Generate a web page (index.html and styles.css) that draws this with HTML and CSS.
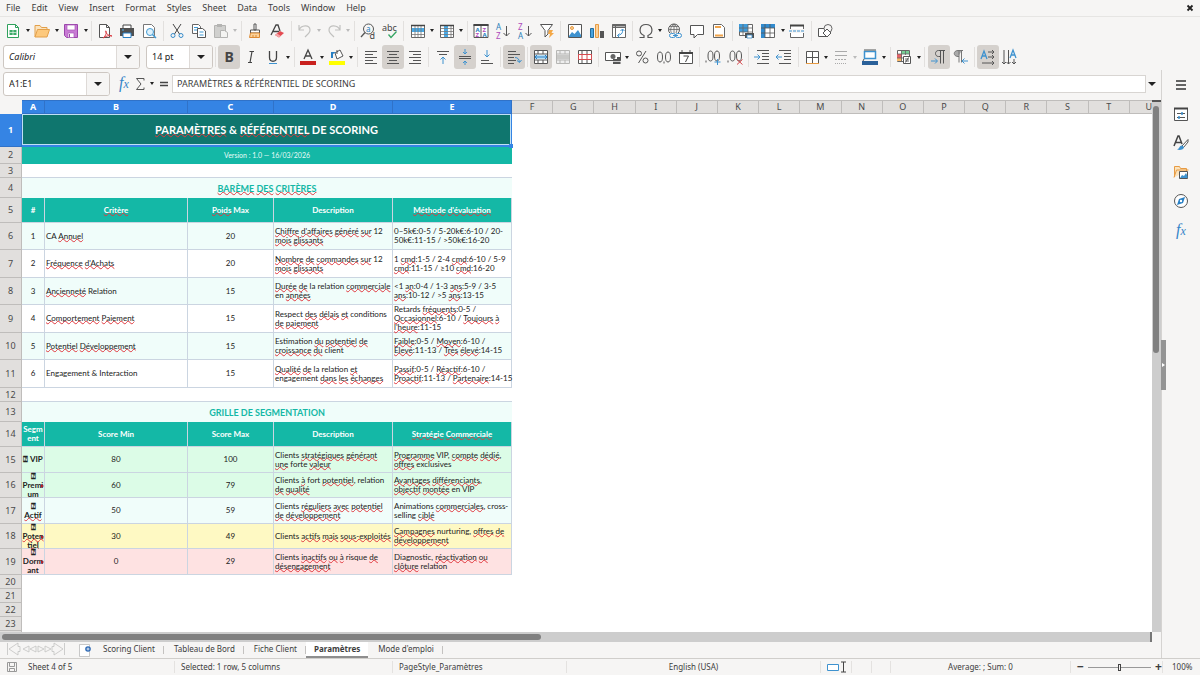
FILE: index.html
```html
<!DOCTYPE html>
<html lang="fr">
<head>
  <meta charset="UTF-8">
  <meta name="viewport" content="width=device-width, initial-scale=1.0">
  <title>Paramètres</title>
  <link rel="stylesheet" href="styles.css">
</head>
<body>
  <nav class="menubar">
    <button>File</button><button>Edit</button><button>View</button><button>Insert</button><button>Format</button><button>Styles</button><button>Sheet</button><button>Data</button><button>Tools</button><button>Window</button><button>Help</button>
    <button class="close" aria-label="Close document"><svg viewBox="0 0 8 8"><path d="M1.5 1.5l5 5M6.500 1.500l-5 5" stroke="#222" stroke-width="1.8"/></svg></button>
  </nav>

  <!-- standard toolbar -->
  <div class="toolbar standard">
    <div class="group">
      <button aria-label="New"><svg viewBox="0 0 16 16"><path d="M2.500 1.500h8l3 3v10h-11z" fill="#fff" stroke="#2fa15c"/><path d="M10.500 1.500v3h3" stroke="#2fa15c"/><path d="M4.500 7h7v5h-7z" fill="#3cab68"/><path d="M4.500 9.500h7M8 7v5" stroke="#fff" stroke-width=".6"/></svg></button><button class="dd" aria-label="New options"></button>
      <button aria-label="Open"><svg viewBox="0 0 16 16"><path d="M1 14V2.500h5l1.500 2H13V7" fill="#fbe3bd" stroke="#e3a04a"/><path d="M1 14L3.500 6.500h12L13 14z" fill="#fdc97d" stroke="#e3a04a"/></svg></button><button class="dd" aria-label="Open options"></button>
      <button aria-label="Save"><svg viewBox="0 0 16 16"><path d="M1.500 1.500h13v13h-11l-2-2z" fill="#c87ad4" stroke="#9b46ab"/><path d="M4 2h8v5H4zM5 10h6v4.500H5z" fill="#fff" stroke="#a95ab8" stroke-width=".7"/><path d="M6.500 11v3" stroke="#9b46ab"/></svg></button><button class="dd" aria-label="Save options"></button>
    </div>
    <i class="sep"></i>
    <div class="group">
      <button aria-label="Export as PDF"><svg viewBox="0 0 16 16"><path d="M2.500 1.500h7l3 3v10h-10z" fill="#fff" stroke="#555"/><path d="M9.500 1.500v3h3" stroke="#555"/><path d="M6 15c3-2 4-6 3-7s-1 4 6 5c-3-1-6 0-9 2" stroke="#dc3d45"/></svg></button>
      <button aria-label="Print"><svg viewBox="0 0 16 16"><path d="M4 5V2h8v3" fill="#fff" stroke="#444"/><path d="M1 5h14v8H1z" fill="#505050"/><path d="M4 10h8v4.500H4z" fill="#fff" stroke="#287fc4"/><path d="M3 7h2" stroke="#4eb3f2"/></svg></button>
      <button aria-label="Print preview"><svg viewBox="0 0 16 16"><path d="M2.500 1.500h8l3 3v10h-11z" fill="#fff" stroke="#777"/><circle cx="9" cy="9" r="3.500" fill="#dff1fb" stroke="#419bd3"/><path d="M11.500 11.500l3.500 3.500" stroke="#419bd3" stroke-width="1.500"/></svg></button>
    </div>
    <i class="sep"></i>
    <div class="group">
      <button aria-label="Cut"><svg viewBox="0 0 16 16"><path d="M4 1l6.500 10M12 1L5.500 11" stroke="#444"/><circle cx="4" cy="12.500" r="2" stroke="#368ccb"/><circle cx="12" cy="12.500" r="2" stroke="#368ccb"/></svg></button>
      <button aria-label="Copy"><svg viewBox="0 0 16 16"><path d="M1.500 1.500h6l2 2v7h-8z" fill="#fff" stroke="#666"/><path d="M6.500 5.500h5l3 2.500v6.500h-8z" fill="#fff" stroke="#555"/><path d="M3 4.500h4M3 7h3M8.500 9h4M8.500 12h4" stroke="#3e9bd6"/></svg></button>
      <button aria-label="Paste"><svg viewBox="0 0 16 16"><path d="M1.500 2.500h11v12h-11z" fill="#d0d0ce" stroke="#b4b4b2"/><path d="M4 1h5v3H4z" fill="#b4b4b2"/><path d="M7.500 7.500h4l3 2v5h-7z" fill="#f4f4f2" stroke="#b4b4b2"/></svg></button><button class="dd off" aria-label="Paste options"></button>
    </div>
    <i class="sep"></i>
    <div class="group">
      <button aria-label="Clone formatting"><svg viewBox="0 0 16 16"><path d="M7 1h2v6H7zM3.500 7h9v3h-9z" fill="#fff" stroke="#555"/><path d="M3.500 10h9v4.500h-10z" fill="#fbd29b" stroke="#dd8b35"/><path d="M6 14v-2m3 2v-2" stroke="#dd8b35"/></svg></button>
      <button aria-label="Clear formatting"><svg viewBox="0 0 16 16"><path d="M2 12L7 2h2l2 6M4 8.500h6" stroke="#444" stroke-width="1.300"/><path d="M6 12l5-4 4 2-5 4.500z" fill="#e44b52"/><path d="M6 12l2-1.600 3.500 2.300L10 14.500z" fill="#f4a4a7"/></svg></button>
    </div>
    <i class="sep"></i>
    <div class="group">
      <button aria-label="Undo"><svg viewBox="0 0 16 16"><path d="M2 2v5h5M2 7c2-5 11-6 11 0 0 3-3 5-5 7" stroke="#c1c1bf" stroke-width="1.200"/></svg></button><button class="dd off" aria-label="Undo options"></button>
      <button aria-label="Redo"><svg viewBox="0 0 16 16"><path d="M14 2v5H9M14 7C12 2 3 1 3 7c0 3 3 5 5 7" stroke="#c1c1bf" stroke-width="1.200"/></svg></button><button class="dd off" aria-label="Redo options"></button>
    </div>
    <i class="sep"></i>
    <div class="group">
      <button aria-label="Find and replace"><svg viewBox="0 0 16 16"><circle cx="8.500" cy="6" r="5" stroke="#555"/><path d="M5 9.500L1 14" stroke="#555" stroke-width="1.300"/><text x="6" y="8.500" font-size="8" fill="#2780bd">a</text><text x="9.500" y="15.500" font-size="9" fill="#444">d</text></svg></button>
      <button aria-label="Spelling"><svg viewBox="0 0 16 16"><text x="0" y="7.500" font-size="9" fill="#444">abc</text><path d="M6.500 11.500l2.500 3 5.500-6" stroke="#34a563" stroke-width="1.300"/></svg></button>
    </div>
    <i class="sep"></i>
    <div class="group">
      <button aria-label="Row"><svg viewBox="0 0 16 16"><path d="M1.500 2.500h13v12h-13z" fill="#fff" stroke="#666"/><path d="M2 5h12v4H2z" fill="#49a9e5"/><path d="M5 2v12M8 2v12M11 2v12M2 11.500h12" stroke="#777" stroke-width=".8"/><path d="M1 2.500h14" stroke="#444" stroke-width="1.500"/></svg></button><button class="dd" aria-label="Row options"></button>
      <button aria-label="Column"><svg viewBox="0 0 16 16"><path d="M1.500 2.500h13v12h-13z" fill="#fff" stroke="#666"/><path d="M5 3h4v11H5z" fill="#49a9e5"/><path d="M12 2v12M2 5.500h12M2 8.500h12M2 11.500h12" stroke="#777" stroke-width=".8"/><path d="M1 2.500h14" stroke="#444" stroke-width="1.500"/></svg></button><button class="dd" aria-label="Column options"></button>
    </div>
    <i class="sep"></i>
    <div class="group">
      <button aria-label="Sort"><svg viewBox="0 0 16 16"><path d="M1 1.500h14v13H1zM8 1v14" fill="#fff" stroke="#555"/><path d="M.5 2h15" stroke="#444" stroke-width="2"/><g font-size="6" font-weight="bold"><text x="2.500" y="8.500" fill="#2980ba">A</text><text x="2.500" y="14" fill="#ae4bbb">Z</text><text x="9.500" y="8.500" fill="#ae4bbb">Z</text><text x="9.500" y="14" fill="#2980ba">A</text></g></svg></button>
      <button aria-label="Sort ascending"><svg viewBox="0 0 16 16"><text x="1" y="7" font-size="8" fill="#2980ba">A</text><text x="1" y="15.500" font-size="8" fill="#ae4bbb">Z</text><path d="M11.500 3v10M8.500 10l3 3 3-3" stroke="#555"/></svg></button>
      <button aria-label="Sort descending"><svg viewBox="0 0 16 16"><text x="1" y="7" font-size="8" fill="#ae4bbb">Z</text><text x="1" y="15.500" font-size="8" fill="#2980ba">A</text><path d="M11.500 3v10M8.500 10l3 3 3-3" stroke="#555"/></svg></button>
      <button aria-label="AutoFilter"><svg viewBox="0 0 16 16"><path d="M1.500 1.500h12L9 7.500V11l-3 3V7.500z" fill="#fff" stroke="#555"/><path d="M10 7h4l-1.500 3H15l-5 5 1-4H9z" fill="#f4a846"/></svg></button>
    </div>
    <i class="sep"></i>
    <div class="group">
      <button aria-label="Insert image"><svg viewBox="0 0 16 16"><path d="M1.500 1.500h13v13h-13z" fill="#fff" stroke="#555"/><circle cx="5" cy="5" r="1.500" fill="#fbd29b" stroke="#e79b43"/><path d="M2 13l3-4 2.500 2L11 7l3 5v2H2z" fill="#3e92cf"/></svg></button>
      <button aria-label="Insert chart"><svg viewBox="0 0 16 16"><path d="M1.500 5.500h3v9h-3z" fill="#4aa4df" stroke="#246e9f"/><path d="M6.500 1.500h3v13h-3z" fill="#fbd29b" stroke="#e79b43"/><path d="M11 8h4v7h-4z" fill="#555"/></svg></button>
      <button aria-label="Insert pivot table"><svg viewBox="0 0 16 16"><path d="M1.500 1.500h13v13h-13zM2 4.500h12M4.500 2v12" fill="#fff" stroke="#666"/><path d="M1 2.500h14" stroke="#666" stroke-width="2"/><path d="M11.500 6.500v2c0 2-2 3.500-5 4M9.500 8l2-2 2 2M8.500 10.500l-2 2 2 2" stroke="#3e92cf"/></svg></button>
    </div>
    <i class="sep"></i>
    <div class="group">
      <button aria-label="Special character"><svg viewBox="0 0 16 16"><path d="M1.500 14.500H6v-2C0 10 1 1.500 8 1.500s8 8.500 2 11v2h4.500" stroke="#555" stroke-width="1.200"/></svg></button><button class="dd" aria-label="Special character options"></button>
      <button aria-label="Hyperlink"><svg viewBox="0 0 16 16"><circle cx="7" cy="6.500" r="5.500" stroke="#555"/><path d="M1.500 6.500h11M7 1v9M7 1C3 4 3 8 5 11M7 1c4 3 3 6 2 9M2.500 3.500h9" stroke="#666" stroke-width=".8"/><path d="M2 10h13v5H2z" fill="#f6f5f4"/><rect x="2.500" y="10.500" width="6" height="4" rx="2" stroke="#3e92cf"/><rect x="8.500" y="10.500" width="6" height="4" rx="2" stroke="#3e92cf"/><path d="M6 12.500h5" stroke="#3e92cf"/></svg></button>
      <button aria-label="Comment"><svg viewBox="0 0 16 16"><path d="M1.500 2.500h13v9h-6L5 15v-3.500H1.500z" fill="#fff" stroke="#555"/></svg></button>
      <button aria-label="Headers and footers"><svg viewBox="0 0 16 16"><path d="M2.500 1.500h8l3 3v10h-11z" fill="#fff" stroke="#666"/><path d="M4 3h6v2H4zM4 11.500h8v2H4z" fill="#f0a34a"/></svg></button>
    </div>
    <i class="sep"></i>
    <div class="group">
      <button aria-label="Print area"><svg viewBox="0 0 16 16"><path d="M1.500 1.500h13v11h-13z" fill="#fff" stroke="#666"/><path d="M1 1h9v8H1z" fill="#3e9bda"/><path d="M5 1v12M10 1v12M1 5h13M1 9h13" stroke="#666" stroke-width=".8"/><path d="M7 10h9v5H7z" fill="#505050"/><path d="M9 12h5v3H9z" fill="#fff" stroke="#3e92cf" stroke-width=".8"/></svg></button>
      <button aria-label="Freeze rows and columns"><svg viewBox="0 0 16 16"><path d="M1.500 1.500h13v13h-13z" fill="#fff" stroke="#666"/><path d="M1 1h14v4H5v10H1z" fill="#318bcf"/><path d="M5 1v14M10 1v14M1 5h14M1 10h14" stroke="#555" stroke-width=".8"/></svg></button><button class="dd" aria-label="Freeze options"></button>
      <button aria-label="Split window"><svg viewBox="0 0 16 16"><path d="M1.500 6V2.500h13V6M1.500 10v4.500h13V10" fill="#fff" stroke="#666"/><path d="M1 2.500h14" stroke="#444" stroke-width="2"/><path d="M0 8h16" stroke="#3e92cf" stroke-dasharray="3 1"/></svg></button>
    </div>
    <i class="sep"></i>
    <div class="group">
      <button aria-label="Show draw functions"><svg viewBox="0 0 16 16"><path d="M1.500 5.500h8v8h-8z" fill="#fff" stroke="#555"/><circle cx="11" cy="5.500" r="4" fill="#f6f5f4" stroke="#666"/><path d="M10 6l4 4-4 4-4-4z" fill="#fff" stroke="#555"/></svg></button>
    </div>
  </div>

  <!-- formatting toolbar -->
  <div class="toolbar formatting">
    <div class="fonts">
      <div class="combo font-name"><input type="text" value="Calibri" aria-label="Font name"><button aria-label="Font list"></button></div>
      <div class="combo font-size"><input type="text" value="14 pt" aria-label="Font size"><button aria-label="Size list"></button></div>
    </div>
    <i class="sep"></i>
    <div class="group">
      <button class="on" aria-label="Bold"><svg viewBox="0 0 16 16"><text x="3.500" y="13" font-size="14" font-weight="bold" fill="#444">B</text></svg></button>
      <button aria-label="Italic"><svg viewBox="0 0 16 16"><path d="M6.500 2.500H11M5 13.500h4M9 2.500l-2 11" stroke="#444" stroke-width="1.200"/></svg></button>
      <button aria-label="Underline"><svg viewBox="0 0 16 16"><path d="M4.500 2v6.500c0 5 7 5 7 0V2" stroke="#444" stroke-width="1.300"/><path d="M4 14.500h8" stroke="#3e92cf"/></svg></button><button class="dd" aria-label="Underline options"></button>
    </div>
    <i class="sep"></i>
    <div class="group">
      <button aria-label="Font color"><svg viewBox="0 0 16 16"><path d="M4 10l4-9 4 9M5 7h6" stroke="#444" stroke-width="1.300"/><path d="M0 12h16v4H0z" fill="#c9211e"/></svg></button><button class="dd" aria-label="Font color options"></button>
      <button aria-label="Background color"><svg viewBox="0 0 16 16"><path d="M6 4l5-3 3 6-6 3z" fill="#fff" stroke="#555"/><path d="M8 5V1" stroke="#555"/><path d="M2 9V3h5L4 5v4z" fill="#287fc4"/><path d="M0 12h16v4H0z" fill="#ff0"/></svg></button><button class="dd" aria-label="Background color options"></button>
    </div>
    <i class="sep"></i>
    <div class="group">
      <button aria-label="Align left"><svg viewBox="0 0 16 16"><path d="M2 2.500h12M2 5.500h8M2 8.500h12M2 11.500h8M2 14.500h12" stroke="#555"/></svg></button>
      <button class="on" aria-label="Center horizontally"><svg viewBox="0 0 16 16"><path d="M2 2.500h12M4 5.500h8M2 8.500h12M4 11.500h8M2 14.500h12" stroke="#555"/></svg></button>
      <button aria-label="Align right"><svg viewBox="0 0 16 16"><path d="M2 2.500h12M6 5.500h8M2 8.500h12M6 11.500h8M2 14.500h12" stroke="#555"/></svg></button>
    </div>
    <i class="sep"></i>
    <div class="group">
      <button aria-label="Align top"><svg viewBox="0 0 16 16"><path d="M2 2.500h12M4 5.500h8" stroke="#555"/><path d="M8 15V8M5.500 10.500L8 8l2.500 2.500" stroke="#3e92cf"/></svg></button>
      <button class="on" aria-label="Center vertically"><svg viewBox="0 0 16 16"><path d="M2 7.500h12M2 9.500h12" stroke="#555"/><path d="M8 0v5M6 3l2 2 2-2M8 16v-4M6 14l2-2 2 2" stroke="#3e92cf"/></svg></button>
      <button aria-label="Align bottom"><svg viewBox="0 0 16 16"><path d="M2 14.500h12M2 11.500h8" stroke="#555"/><path d="M8 1v7M5.500 5.500L8 8l2.500-2.500" stroke="#3e92cf"/></svg></button>
    </div>
    <i class="sep"></i>
    <div class="group">
      <button class="on" aria-label="Wrap text"><svg viewBox="0 0 16 16"><path d="M2 2.500h8M2 5.500h12M2 8.500h6M2 11.500h8M2 14.500h6" stroke="#555"/><path d="M9 8.500c3 0 4 2 4.500 4.500M11 11.500l2.500 2 2-2.500" stroke="#3e92cf"/></svg></button>
    </div>
    <i class="sep"></i>
    <div class="group">
      <button class="on" aria-label="Merge and center cells"><svg viewBox="0 0 16 16"><path d="M1.500 1.500h13v13h-13zM1 5h14M1 11h14M5 1v4M10 1v4M5 11v4M10 11v4" fill="#fff" stroke="#555"/><path d="M2 6h12v4H2z" fill="#b9e0f7"/><path d="M2 8h12M4 6L2 8l2 2M12 6l2 2-2 2" stroke="#287fc4"/></svg></button>
      <button aria-label="Merge cells"><svg viewBox="0 0 16 16"><path d="M1.500 1.500h13v13h-13zM1 5h14M1 11h14M5 1v4M10 1v4M5 11v4M10 11v4" fill="#eee" stroke="#b6b6b4"/><path d="M2 6h12v4H2z" fill="#c9c9c7"/></svg></button>
      <button aria-label="Unmerge cells"><svg viewBox="0 0 16 16"><path d="M1.500 1.500h13v13h-13zM5 1v14M10 1v14" fill="#fff" stroke="#555"/><path d="M1.500 5.500h13v5h-13zM5 5v6M10 5v6" fill="#fff" stroke="#d64a4f"/></svg></button>
    </div>
    <i class="sep"></i>
    <div class="group">
      <button aria-label="Format as currency"><svg viewBox="0 0 16 16"><path d="M.5 3.500h15v8H.5z" fill="#fff" stroke="#555"/><circle cx="8" cy="7.500" r="2.500" fill="#666"/><path d="M8 10h4v5H8zM12 8h3.500v7H12z" fill="#555"/><path d="M8 12.500h8" stroke="#fff" stroke-width=".7"/></svg></button><button class="dd" aria-label="Currency options"></button>
      <button aria-label="Format as percent"><svg viewBox="0 0 16 16"><circle cx="5" cy="4.500" r="2.500" stroke="#555"/><circle cx="11.500" cy="11.500" r="2.500" stroke="#555"/><path d="M12 2L4.500 14" stroke="#555"/></svg></button>
      <button aria-label="Format as number"><svg viewBox="0 0 16 16"><ellipse cx="4" cy="8" rx="2.500" ry="5" stroke="#555"/><ellipse cx="12" cy="8" rx="2.500" ry="5" stroke="#555"/><path d="M8 12.500v2" stroke="#555"/></svg></button>
      <button aria-label="Format as date"><svg viewBox="0 0 16 16"><path d="M1.500 3.500h13v11h-13zM4 1v3M12 1v3" fill="#fff" stroke="#555"/><path d="M1 4h14" stroke="#444" stroke-width="2"/><path d="M5.500 7h5L7.500 13" stroke="#444"/></svg></button>
    </div>
    <i class="sep"></i>
    <div class="group">
      <button aria-label="Add decimal place"><svg viewBox="0 0 16 16"><ellipse cx="5.500" cy="7" rx="2.500" ry="5" stroke="#555"/><ellipse cx="12" cy="7" rx="2.500" ry="5" stroke="#555"/><path d="M1 11.500v2" stroke="#555"/><path d="M12.500 10v6M9.500 13h6" stroke="#3e92cf"/></svg></button>
      <button aria-label="Delete decimal place"><svg viewBox="0 0 16 16"><ellipse cx="5.500" cy="7" rx="2.500" ry="5" stroke="#555"/><ellipse cx="12" cy="7" rx="2.500" ry="5" stroke="#555"/><path d="M1 11.500v2" stroke="#555"/><path d="M10 10.500l5.500 5M15.500 10.500l-5.500 5" stroke="#d64a4f"/></svg></button>
    </div>
    <i class="sep"></i>
    <div class="group">
      <button aria-label="Increase indent"><svg viewBox="0 0 16 16"><path d="M3 1.500h12M8 4.500h7M8 7.500h7M8 10.500h7M3 14.500h12" stroke="#555"/><path d="M0 8h6M3.500 5.500L6 8l-2.500 2.500" stroke="#3e92cf"/></svg></button>
      <button aria-label="Decrease indent"><svg viewBox="0 0 16 16"><path d="M3 1.500h12M8 4.500h7M8 7.500h7M8 10.500h7M3 14.500h12" stroke="#555"/><path d="M0 8h6M2.500 5.500L0 8l2.500 2.500" stroke="#3e92cf"/></svg></button>
    </div>
    <i class="sep"></i>
    <div class="group">
      <button aria-label="Borders"><svg viewBox="0 0 16 16"><path d="M2.500 2.500h12v12h-12zM2 8.500h12M8.500 2v12" fill="#fff" stroke="#555"/><path d="M2 14.500h13" stroke="#e79b43"/></svg></button><button class="dd" aria-label="Border options"></button>
      <button aria-label="Border style"><svg viewBox="0 0 16 16"><path d="M2 2.500h12M2 6.500h12" stroke="#aaa"/><path d="M2 10.500h12" stroke="#aaa" stroke-dasharray="2 1"/><path d="M2 14.500h12" stroke="#aaa" stroke-dasharray="1 1"/></svg></button><button class="dd off" aria-label="Border style options"></button>
      <button aria-label="Border color"><svg viewBox="0 0 16 16"><path d="M2.500 2.500h11v7h-11z" fill="#fff" stroke="#3e92cf" stroke-width="1.500"/><path d="M2 1h12M2 10l-1 2" stroke="#555"/><path d="M0 12h16v4H0z" fill="#2a6099"/></svg></button><button class="dd" aria-label="Border color options"></button>
    </div>
    <i class="sep"></i>
    <div class="group">
      <button aria-label="Conditional formatting"><svg viewBox="0 0 16 16"><path d="M1.500 1.500h12v11h-12z" fill="#fff" stroke="#666"/><path d="M5 2h8v3H5z" fill="#76cf95"/><path d="M1 5h5v4H1z" fill="#e56368"/><path d="M1 9h5v3H1z" fill="#f8b868"/><path d="M5.500 1v12M9.500 1v5M1 5h13M1 9h6" stroke="#666" stroke-width=".8"/><path d="M7.500 7.500h7v7h-7z" fill="#fff" stroke="#555"/><path d="M9 10h4M9 12h4M12.500 8.500l-3 5" stroke="#444" stroke-width=".8"/></svg></button><button class="dd" aria-label="Conditional formatting options"></button>
    </div>
    <i class="sep"></i>
    <div class="group">
      <button class="on" aria-label="Left-to-right"><svg viewBox="0 0 16 16"><path d="M14 1.500H7.500c-4 0-4 6 0 6h2M9.500 1.500v13M12.500 1.500v13" stroke="#555"/><path d="M0 12h6M4 9.500L6.500 12 4 14.500" stroke="#3e92cf"/></svg></button>
      <button aria-label="Right-to-left"><svg viewBox="0 0 16 16"><path d="M9 1.500H5c-5 0-5 6 0 6z" fill="#aaa"/><path d="M10 1.500H5c-5 0-5 6 0 6h1M6 1.500v12M8.500 1.500v12" stroke="#777"/><path d="M15 12H9M11.500 9.500L9 12l2.500 2.500" stroke="#3e92cf"/></svg></button>
    </div>
    <i class="sep"></i>
    <div class="group">
      <button class="on" aria-label="Text direction left to right"><svg viewBox="0 0 16 16"><path d="M1 10l3-8 3 8M2 7h4" stroke="#3e92cf" stroke-width="1.300"/><path d="M8 3h6M8 8h6M2 14h12M12 1l2 2-2 2M12 6l2 2-2 2M12 12l2 2-2 2" stroke="#555"/></svg></button>
      <button aria-label="Text direction top to bottom"><svg viewBox="0 0 16 16"><path d="M8 9l3-8 3 8M9 6h4" stroke="#3e92cf" stroke-width="1.300"/><path d="M2 1v14M6.500 1v14M12 10v5M0 13l2 2 2-2M4.500 13l2 2 2-2M10 13l2 2 2-2" stroke="#555"/></svg></button>
    </div>
  </div>

  <div class="main">
    <div class="document">
      <div class="formula-bar">
        <div class="combo name-box"><input type="text" value="A1:E1" aria-label="Name box"><button aria-label="Named ranges"></button></div>
        <button class="fx" aria-label="Function wizard"><em>f</em><em>x</em></button>
        <button class="sum" aria-label="Select function"><svg viewBox="0 0 10 14"><path d="M9 3.500v-2H1.500L6 7l-4.500 5.500H9v-2" stroke="#555"/></svg></button>
        <button class="dd" aria-label="Function list"></button>
        <button class="eq" aria-label="Formula"><svg viewBox="0 0 10 14"><path d="M1 5.500h8M1 8.500h8" stroke="#444" stroke-width="1.500"/></svg></button>
        <input type="text" class="formula" value="PARAMÈTRES &amp; RÉFÉRENTIEL DE SCORING" aria-label="Input line">
        <button class="expand" aria-label="Expand formula bar"></button>
      </div>

      <div class="sheet-area">
        <div class="sheet">
          <table>
            <colgroup>
              <col class="c-head"><col class="c-a"><col class="c-b"><col class="c-c"><col class="c-d"><col class="c-e"><col span="15"><col class="c-u">
            </colgroup>
            <thead>
              <tr>
                <th class="corner"></th><th class="sel">A</th><th class="sel">B</th><th class="sel">C</th><th class="sel">D</th><th class="sel">E</th><th>F</th><th>G</th><th>H</th><th>I</th><th>J</th><th>K</th><th>L</th><th>M</th><th>N</th><th>O</th><th>P</th><th>Q</th><th>R</th><th>S</th><th>T</th><th class="cut">U</th>
              </tr>
            </thead>
            <tbody>
              <tr class="title"><th class="sel">1</th><td colspan="5"><u>PARAMÈTRES</u> &amp; <u>RÉFÉRENTIEL</u> DE SCORING</td></tr>
              <tr class="version"><th>2</th><td colspan="5">Version : 1.0 — 16/03/2026</td></tr>
              <tr class="empty"><th>3</th><td colspan="5"></td></tr>
              <tr class="section"><th>4</th><td colspan="5"><u>BARÈME</u> <u>DES</u> <u>CRITÈRES</u></td></tr>
              <tr class="heading"><th>5</th><td>#</td><td><u>Critère</u></td><td><u>Poids</u> Max</td><td>Description</td><td><u>Méthode</u> <u>d'évaluation</u></td></tr>
              <tr class="criterion mint"><th>6</th><td>1</td><td>CA <u>Annuel</u></td><td>20</td><td><u>Chiffre</u> <u>d'affaires</u> <u>généré</u> <u>sur</u> 12<br><u>mois</u> <u>glissants</u></td><td>0–5k€:0-5 / 5-20k€:6-10 / 20-<br>50k€:11-15 / &gt;50k€:16-20</td></tr>
              <tr class="criterion"><th>7</th><td>2</td><td><u>Fréquence</u> <u>d'Achats</u></td><td>20</td><td><u>Nombre</u> <u>de</u> <u>commandes</u> <u>sur</u> 12<br><u>mois</u> <u>glissants</u></td><td>1 <u>cmd</u>:1-5 / 2-4 <u>cmd</u>:6-10 / 5-9<br><u>cmd</u>:11-15 / ≥10 <u>cmd</u>:16-20</td></tr>
              <tr class="criterion mint"><th>8</th><td>3</td><td><u>Ancienneté</u> Relation</td><td>15</td><td><u>Durée</u> <u>de</u> la relation <u>commerciale</u><br>en <u>années</u></td><td>&lt;1 <u>an</u>:0-4 / 1-3 <u>ans</u>:5-9 / 3-5<br><u>ans</u>:10-12 / &gt;5 <u>ans</u>:13-15</td></tr>
              <tr class="criterion"><th>9</th><td>4</td><td><u>Comportement</u> <u>Paiement</u></td><td>15</td><td>Respect <u>des</u> <u>délais</u> <u>et</u> conditions<br><u>de</u> <u>paiement</u></td><td>Retards <u>fréquents</u>:0-5 /<br><u>Occasionnel</u>:6-10 / <u>Toujours</u> <u>à</u><br><u>l'heure</u>:11-15</td></tr>
              <tr class="criterion mint"><th>10</th><td>5</td><td><u>Potentiel</u> <u>Développement</u></td><td>15</td><td>Estimation <u>du</u> <u>potentiel</u> <u>de</u><br><u>croissance</u> <u>du</u> client</td><td><u>Faible</u>:0-5 / <u>Moyen</u>:6-10 /<br><u>Élevé</u>:11-13 / <u>Très</u> <u>élevé</u>:14-15</td></tr>
              <tr class="criterion"><th>11</th><td>6</td><td>Engagement &amp; Interaction</td><td>15</td><td><u>Qualité</u> <u>de</u> la relation <u>et</u><br>engagement <u>dans</u> <u>les</u> <u>échanges</u></td><td><u>Passif</u>:0-5 / <u>Réactif</u>:6-10 /<br><u>Proactif</u>:11-13 / <u>Partenaire</u>:14-15</td></tr>
              <tr class="empty"><th>12</th><td colspan="5"></td></tr>
              <tr class="section"><th>13</th><td colspan="5">GRILLE DE SEGMENTATION</td></tr>
              <tr class="heading"><th>14</th><td>Segm<br>ent</td><td>Score Min</td><td>Score Max</td><td>Description</td><td><u>Stratégie</u> <u>Commerciale</u></td></tr>
              <tr class="segment green"><th>15</th><td><div>⍰ VIP</div></td><td>80</td><td>100</td><td>Clients <u>stratégiques</u> <u>générant</u><br><u>une</u> forte <u>valeur</u></td><td><u>Programme</u> VIP, <u>compte</u> <u>dédié</u>,<br><u>offres</u> exclusives</td></tr>
              <tr class="segment green"><th>16</th><td class="more"><div>⍰<br>Premi<br>um</div></td><td>60</td><td>79</td><td>Clients <u>à</u> fort <u>potentiel</u>, relation<br><u>de</u> <u>qualité</u></td><td><u>Avantages</u> <u>différenciants</u>,<br><u>objectif</u> <u>montée</u> en VIP</td></tr>
              <tr class="segment mint"><th>17</th><td><div>⍰<br><u>Actif</u></div></td><td>50</td><td>59</td><td>Clients <u>réguliers</u> <u>avec</u> <u>potentiel</u><br><u>de</u> <u>développement</u></td><td>Animations <u>commerciales</u>, cross-<br>selling <u>ciblé</u></td></tr>
              <tr class="segment yellow"><th>18</th><td class="more"><div>⍰<br><u>Poten</u><br><u>tiel</u></div></td><td>30</td><td>49</td><td>Clients <u>actifs</u> <u>mais</u> <u>sous-exploités</u></td><td><u>Campagnes</u> nurturing, <u>offres</u> <u>de</u><br><u>développement</u></td></tr>
              <tr class="segment red"><th>19</th><td class="more"><div>⍰<br>Dorm<br>ant</div></td><td>0</td><td>29</td><td>Clients <u>inactifs</u> <u>ou</u> <u>à</u> risque <u>de</u><br><u>désengagement</u></td><td>Diagnostic, <u>réactivation</u> <u>ou</u><br><u>clôture</u> relation</td></tr>
              <tr class="blank"><th>20</th></tr>
              <tr class="blank"><th>21</th></tr>
              <tr class="blank"><th>22</th></tr>
              <tr class="blank"><th>23</th></tr>
              <tr class="blank"><th></th></tr>
            </tbody>
          </table>
        </div>
        <div class="v-scroll"><i></i></div>
      </div>
      <div class="h-scroll"><i></i></div>

      <div class="tabs">
        <div class="tab-nav" aria-hidden="true"><svg viewBox="0 0 60 14"><path d="M1.500 1v12M12 1L3 7l9 6V9.500h2v-5h-2zM23 4l-6 3 6 3zM30 4l-6 3 6 3zM32 4l6 3-6 3zM39 4l6 3-6 3zM48 1l9 6-9 6V9.500h-2v-5h2zM58.500 1v12" stroke="#c3c3c1" stroke-width=".8"/></svg></div>
        <button class="add" aria-label="Add sheet"><svg viewBox="0 0 14 14"><path d="M1.500 1.500h10v12h-10z" fill="#fff" stroke="#bbb" stroke-width=".8"/><circle cx="10" cy="6" r="2.800" fill="#2d69b5"/><path d="M8.500 6h3M10 4.500v3" stroke="#fff" stroke-width=".8"/></svg></button>
        <button>Scoring Client</button><button>Tableau de Bord</button><button>Fiche Client</button><button class="active">Paramètres</button><button>Mode d'emploi</button>
      </div>
    </div>

    <aside class="sidebar">
      <button aria-label="Sidebar settings"><svg viewBox="0 0 16 16"><path d="M3 4h10M3 8h10M3 12h10" stroke="#333" stroke-width="1.500"/></svg></button>
      <button aria-label="Properties"><svg viewBox="0 0 16 16"><path d="M1.500 2.500h13v12h-13z" fill="#fff" stroke="#555"/><path d="M1 2.500h14" stroke="#444" stroke-width="2"/><path d="M4 7.500h8M4 11.500h8" stroke="#555"/><path d="M9 6v3M6 10v3" stroke="#3e92cf" stroke-width="1.500"/></svg></button>
      <button aria-label="Styles"><svg viewBox="0 0 16 16"><path d="M1 11L5 1h1l3 8M2.500 7.500H8" stroke="#444" stroke-width="1.500"/><path d="M15 4.500L9 11l1.500 1.500L15 7z" fill="#fff" stroke="#555"/><path d="M9 10.500c-3 0-2 3-5 4 3 1 7 0 7-2.500z" fill="#3e92cf"/></svg></button>
      <button aria-label="Gallery"><svg viewBox="0 0 16 16"><path d="M1.500 13V2.500h5l1 2h6V7M1 13.500L3.500 6h12" fill="#fbe3bd" stroke="#e79b43"/><path d="M6.500 7.500h8v7h-8z" fill="#fff" stroke="#555"/><path d="M7 14l2-3 2 1 2-3 1.500 3v2z" fill="#3e92cf"/></svg></button>
      <button aria-label="Navigator"><svg viewBox="0 0 16 16"><circle cx="8" cy="8" r="6.500" fill="#fff" stroke="#555"/><path d="M12 4l-2 6-6 2 2-6z" fill="#287fc4"/><circle cx="8" cy="8" r="1.200" fill="#fff"/></svg></button>
      <button class="fx" aria-label="Functions"><em>f</em><em>x</em></button>
      <i class="handle"></i>
    </aside>
  </div>

  <footer class="statusbar">
    <span class="icon"><svg viewBox="0 0 12 12"><path d="M1.500 1.500h9v9h-9zM3.500 1.500v4h5v-4M3.500 10.500v-3h5v3" stroke="#999"/></svg></span>
    <span>Sheet 4 of 5</span>
    <span>Selected: 1 row, 5 columns</span>
    <span>PageStyle_Paramètres</span>
    <span class="center">English (USA)</span>
    <span class="icon"><svg class="mode" viewBox="0 0 20 12"><path d="M.5 3.500h11v6H.5z" fill="#fff" stroke="#3e92cf"/><path d="M14 1h5M14 11h5M16.500 1v10" stroke="#444"/></svg></span>
    <span></span>
    <span></span>
    <span class="center">Average: ; Sum: 0</span>
    <span class="zoom"><button aria-label="Zoom out">−</button><input type="range" min="0" max="100" value="50" aria-label="Zoom"><button aria-label="Zoom in">+</button></span>
    <span>100%</span>
  </footer>
</body>
</html>
```
FILE: styles.css
```css
* {
  box-sizing: border-box;
}
body {
  display: flex;
  flex-direction: column;
  height: 100vh;
  margin: 0;
  overflow: hidden;
  background-color: #f6f5f4;
  color: #3d3d3d;
  font-family: "Noto Sans", sans-serif;
  font-size: 9px;
  line-height: 12px;
}
button, input {
  margin: 0;
  padding: 0;
  border: none;
  background: none;
  color: inherit;
  font: inherit;
}
svg {
  display: block;
  fill: none;
  overflow: visible;
}

/* menu bar */
.menubar {
  display: flex;
  gap: 11px;
  height: 17px;
  padding: 0 6px;
  border-bottom: 1px solid #e6e5e3;
}
.menubar .close {
  margin-left: auto;
}
.close svg {
  width: 8px;
  height: 8px;
}

/* toolbars */
.toolbar {
  display: flex;
  align-items: center;
  justify-content: space-between;
  padding-left: 2px;
}
.standard {
  height: 27px;
  max-width: 836px;
}
.formatting {
  height: 26px;
  max-width: 1021px;
  padding-left: 3px;
}
.group {
  display: flex;
}
.group button {
  display: flex;
  align-items: center;
  justify-content: center;
  width: 22px;
  height: 24px;
  border-radius: 3px;
}
.group button.on {
  background-color: #d5d1cd;
}
.group svg {
  width: 16px;
  height: 16px;
}
.group .dd, .formula-bar .dd {
  width: 7px;
}
.dd::before, .combo button::before, .expand::before {
  content: "";
  display: block;
  width: 0;
  margin: 0 auto;
  border: 2px solid transparent;
  border-top: 3px solid #222;
  border-bottom: none;
}
.dd.off::before {
  border-top-color: #bbb;
}
.combo button::before, .expand::before {
  border-width: 4px 4px 0;
}
.sep {
  width: 1px;
  height: 20px;
  background-color: #e2e0de;
}
.fonts {
  display: flex;
  gap: 6px;
}
.combo {
  display: flex;
  height: 24px;
  border: 1px solid #cdc7c2;
  border-radius: 3px;
  background-color: #fff;
  overflow: hidden;
}
.combo input {
  flex: 1;
  min-width: 0;
  padding-left: 5px;
  color: #222;
}
.combo button {
  width: 23px;
  border-left: 1px solid #dedad7;
  background-color: #f6f5f4;
}
.font-name {
  width: 137px;
}
.font-name input {
  font-style: italic;
}
.font-size {
  width: 67px;
}

/* formula bar */
.main {
  display: flex;
  flex: 1;
  min-height: 0;
}
.document {
  display: flex;
  flex: 1;
  flex-direction: column;
  min-width: 0;
}
.formula-bar {
  display: flex;
  align-items: center;
  height: 30px;
  padding: 0 3px 3px;
}
.name-box {
  width: 107px;
  margin-right: 7px;
}
.fx {
  width: 14px;
  color: #3584c8;
  font-family: "Liberation Serif", serif;
  font-size: 16px;
  white-space: nowrap;
}
.fx em + em {
  font-size: 12px;
}
.sum, .eq {
  width: 17px;
}
.formula-bar svg {
  width: 10px;
  height: 14px;
  margin: 0 auto;
}
.formula {
  flex: 1;
  height: 18px;
  padding-left: 4px;
  border: 1px solid #d8d5d2;
  background-color: #fff;
}
.expand {
  width: 12px;
}

/* spreadsheet */
.sheet-area {
  display: flex;
  flex: 1;
  min-height: 0;
}
.sheet {
  flex: 1;
  overflow: hidden;
  background-color: #fff;
}
table {
  width: 100%;
  table-layout: fixed;
  border-spacing: 0;
}
.c-head, .c-u {
  width: 22px;
}
.c-a {
  width: 23px;
}
.c-b {
  width: 143px;
}
.c-c {
  width: 86px;
}
.c-d, .c-e {
  width: 119px;
}
th {
  padding: 0;
  border-right: 1px solid #bfbdbb;
  border-bottom: 1px solid #bfbdbb;
  background-color: #e1dfdd;
  color: #4a4a4a;
  font-weight: normal;
}
thead th {
  height: 14px;
  border-top: 1px solid #bfbdbb;
}
th.sel {
  border-color: #3072c8;
  background-color: #3584e4;
  color: #fff;
  font-weight: bold;
}
th.corner {
  border-color: #f6f5f4;
  background-color: #f6f5f4;
}
th.cut {
  border-right: none;
  text-align: right;
}
td {
  height: inherit;
  padding: 0 1px;
  border-right: 1px solid #cbd5e1;
  border-bottom: 1px solid #cbd5e1;
  color: #222;
  font-family: Lato, sans-serif;
  font-size: 8px;
  line-height: 9px;
  text-align: center;
  vertical-align: middle;
  white-space: nowrap;
}
/* spell checker marks */
u {
  text-decoration: underline wavy #e0383e 1px;
  text-decoration-skip-ink: none;
  text-underline-offset: -1px;
}
.title {
  height: 33px;
}
.title td {
  position: relative;
  border: 1px solid #3584e4;
  border-width: 0 1px 2px 0;
  background-color: #0f766e;
  box-shadow: inset 0 0 0 1px #bfe0f5;
  color: #fff;
  font-size: 11px;
  font-weight: bold;
}
.title td::after {
  content: "";
  position: absolute;
  right: -2px;
  bottom: -3px;
  width: 4px;
  height: 4px;
  background-color: #3584e4;
}
.version {
  height: 17px;
}
.version td {
  border: none;
  background-color: #14b8a6;
  color: #e6fbf8;
  font-size: 7px;
}
.empty, .blank {
  height: 14px;
}
.empty td {
  border-right: none;
}
.section {
  height: 20px;
}
.section td {
  border: none;
  background-color: #f0fdfa;
  color: #14b8a6;
  font-size: 9px;
  font-weight: bold;
}
.heading {
  height: 25px;
}
.heading td {
  background-color: #14b8a6;
  color: #fff;
  font-weight: bold;
}
.criterion {
  height: 28px;
}
.criterion:nth-child(even) {
  height: 27px;
}
.criterion td:nth-child(3),
.criterion td:nth-child(n+5),
.segment td:nth-child(n+5) {
  text-align: left;
}
.segment {
  height: 26px;
}
.segment:nth-child(even) {
  height: 25px;
}
.segment td:nth-child(2) {
  position: relative;
  padding: 0;
  font-weight: bold;
}
/* three lines are taller than the row and spill over its edges */
.segment div {
  margin: -2px 0;
}
.more::after {
  content: "";
  position: absolute;
  top: 11px;
  right: 0;
  border: 2px solid transparent;
  border-left: 3px solid #b3202a;
  border-right: none;
}
.mint td {
  background-color: #f0fdfa;
}
.green td {
  background-color: #dcfce7;
}
.yellow td {
  background-color: #fef9c3;
}
.red td {
  background-color: #fee2e2;
}

/* scroll bars */
.v-scroll {
  width: 9px;
  padding: 4px 2px 0 1px;
  border-top: 2px solid #555;
  background-color: #cdcdcd;
}
.v-scroll i {
  display: block;
  height: 47%;
  border-radius: 3px;
  background-color: #808080;
}
.h-scroll {
  height: 10px;
  margin-right: 9px;
  padding: 2px;
  border-right: 2px solid #777;
  background-color: #cdcdcd;
}
.h-scroll i {
  display: block;
  width: 47%;
  height: 6px;
  border-radius: 3px;
  background-color: #808080;
}

/* sheet tabs */
.tabs {
  display: flex;
  height: 16px;
  padding-left: 6px;
  font-size: 8px;
}
.tab-nav svg {
  width: 60px;
  height: 14px;
}
.tabs button {
  position: relative;
  padding: 0 9px 2px 10px;
}
.tabs button::after {
  content: "";
  position: absolute;
  top: 4px;
  right: 0;
  width: 1px;
  height: 8px;
  background-color: #c4c2c0;
}
.tabs .add {
  width: 27px;
  padding: 0 0 0 12px;
}
.tabs .add svg {
  width: 14px;
  height: 14px;
}
.tabs .add::after, .tabs .active::after {
  display: none;
}
.tabs .active {
  padding: 0 8px;
  border-bottom: 2px solid #8e8e8e;
  background-color: #fff;
  font-weight: bold;
}

/* sidebar */
.sidebar {
  position: relative;
  display: flex;
  flex-direction: column;
  gap: 13px;
  width: 39px;
  padding-top: 7px;
  border-left: 1px solid #d5d3d1;
}
.sidebar button {
  width: 16px;
  height: 16px;
  margin-left: 11px;
}
.handle {
  position: absolute;
  top: 46%;
  left: -1px;
  width: 5px;
  height: 50px;
  background-color: #949494;
}
.handle::before {
  content: "";
  position: absolute;
  top: 23px;
  left: 1px;
  border: 2px solid transparent;
  border-left: 3px solid #fff;
  border-right: none;
}

/* status bar */
.statusbar {
  display: grid;
  grid-template-columns: 22px 153fr 218fr 174fr 254fr 31px 20px 19px 180fr 92px 37px;
  align-items: center;
  height: 17px;
  border-top: 1px solid #d0cecb;
  font-size: 8px;
}
.statusbar > span {
  min-height: 12px;
  padding-left: 6px;
  border-right: 1px solid #e4e2e0;
  white-space: nowrap;
}
.statusbar .icon:first-child, .statusbar > span:last-child {
  border-right: none;
}
.statusbar > span:last-child {
  padding-left: 9px;
}
.statusbar .center {
  padding: 0;
  text-align: center;
}
.statusbar svg {
  width: 12px;
  height: 12px;
}
.statusbar .mode {
  width: 20px;
}
.zoom {
  display: flex;
  align-items: center;
  gap: 4px;
}
.zoom button {
  width: 7px;
  font-size: 12px;
  font-weight: bold;
}
.zoom input {
  flex: 1;
  min-width: 0;
  height: 12px;
  appearance: none;
  background: linear-gradient(#999, #999) center / 100% 1px no-repeat;
}
.zoom input::-webkit-slider-thumb {
  appearance: none;
  width: 3px;
  height: 7px;
  border: 1px solid #444;
  background-color: #f6f5f4;
}
```
